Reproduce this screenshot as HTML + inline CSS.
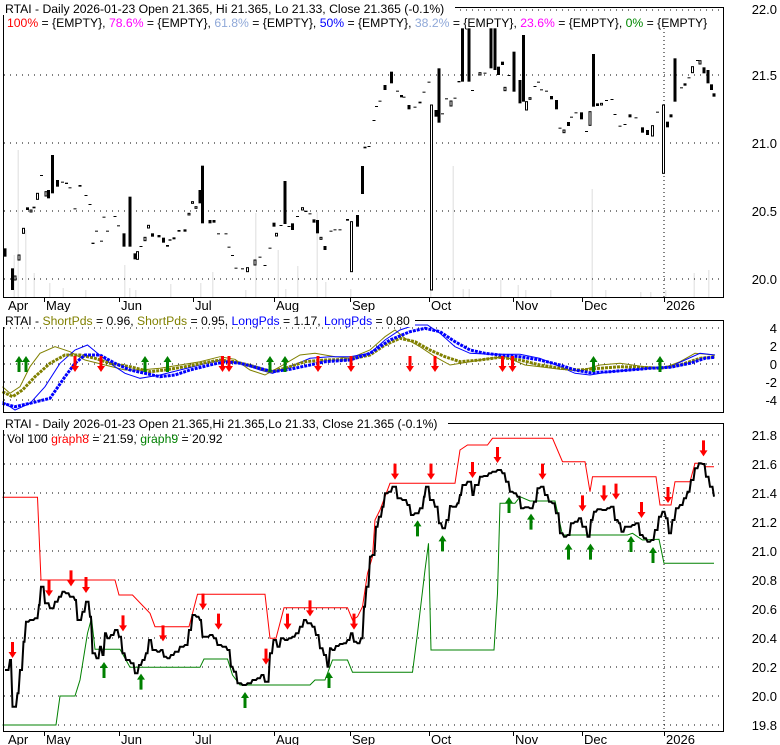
<!DOCTYPE html>
<html><head><meta charset="utf-8"><style>
html,body{margin:0;padding:0;background:#fff;}
svg{display:block;font-family:"Liberation Sans",Arial,sans-serif;}
</style></head><body>
<svg id="s" width="780" height="745" xmlns="http://www.w3.org/2000/svg"></svg>
<script>
var S=document.getElementById('s'),h='';
function L(x1,y1,x2,y2,c,w,d){h+='<line x1="'+x1+'" y1="'+y1+'" x2="'+x2+'" y2="'+y2+'" stroke="'+c+'" stroke-width="'+(w||1)+'"'+(d?' stroke-dasharray="'+d+'"':'')+'/>';}
function T(x,y,t,c,a,fs){h+='<text x="'+x+'" y="'+y+'" font-size="'+(fs||13)+'" fill="'+(c||'#000')+'"'+(a?' text-anchor="'+a+'"':'')+'>'+t+'</text>';}
function P(pts,c,w,fx,fy,d){var s=pts.map(function(p){return (fx(p[0])).toFixed(1)+','+(fy(p[1])).toFixed(1)}).join(' ');h+='<polyline points="'+s+'" fill="none" stroke="'+c+'" stroke-width="'+w+'"'+(d?' stroke-dasharray="'+d+'"':'')+'/>';}
var fx=function(v){return v/2};
var vb=[[27,255],[35,150],[50,230],[67,273],[98,283],[125,288],[170,290],[248,265],[258,288],[270,290],[340,284],[400,283],[424,272],[490,290],[510,213],[555,250],[570,289],[594,266],[633,212],[650,282],[700,289],[860,272],[905,166],[925,289],[937,289],[1000,280],[1035,285],[1050,290],[1100,290],[1183,189],[1210,290],[1280,292],[1300,292],[1330,290],[1387,273],[1416,270]];
vb.forEach(function(v){h+='<rect x="'+(v[0]/2)+'" y="'+v[1]+'" width="1.5" height="'+(297-v[1])+'" fill="#e8e8e8"/>';});
[10,75,143,211,279].forEach(function(y){L(4,y,722,y,'#000',1,'1,5');});
L(664,28,664,297,'#000',1,'1,3');
var C=[[10,745,770,1],[25,805,870,1],[30,828,840,0],[38,765,780,0],[47,685,700,0],[55,622,630,1],[62,630,636,0],[68,620,625,1],[75,580,598,0],[83,525,527,1],[92,575,588,0],[97,570,595,1],[105,465,580,1],[115,540,560,1],[125,545,548,1],[133,548,552,1],[140,562,565,1],[150,625,627,1],[160,555,560,1],[172,585,588,1],[180,612,615,1],[186,728,732,1],[193,692,694,1],[203,722,724,1],[208,650,652,1],[215,692,694,1],[230,648,650,1],[237,676,678,1],[248,700,740,1],[260,590,740,1],[270,760,778,1],[275,755,778,0],[282,738,740,1],[290,712,722,0],[297,676,684,0],[305,700,710,1],[318,705,712,1],[327,713,728,1],[335,735,740,1],[340,718,722,1],[348,712,718,1],[358,690,695,1],[370,688,695,1],[378,640,645,0],[385,605,610,0],[392,620,625,0],[400,570,610,1],[405,497,670,1],[420,660,670,1],[428,660,668,1],[437,700,702,1],[452,700,702,1],[458,740,742,1],[465,765,768,1],[472,803,805,1],[485,805,808,1],[495,803,815,0],[510,780,795,0],[520,770,772,1],[530,795,797,1],[540,743,745,1],[548,668,680,1],[553,700,708,0],[562,675,678,1],[570,543,672,1],[578,678,680,1],[585,670,690,1],[595,648,650,1],[605,623,630,0],[612,632,636,1],[620,640,642,1],[628,658,668,1],[635,660,700,1],[642,712,718,0],[650,738,750,1],[662,692,694,1],[670,688,690,1],[680,688,690,1],[695,657,662,1],[703,665,815,0],[715,645,680,1],[725,498,582,1],[730,440,445,1],[738,438,441,1],[748,360,363,1],[753,318,320,1],[760,302,304,1],[770,255,270,1],[783,215,250,1],[795,272,275,1],[803,285,292,1],[808,290,292,1],[818,315,328,1],[830,320,323,1],[840,305,310,1],[848,275,278,1],[858,245,247,1],[863,315,870,0],[872,330,350,1],[878,205,368,1],[885,340,342,1],[893,295,297,1],[902,303,318,0],[910,293,295,1],[918,243,247,1],[925,85,245,1],[938,85,245,1],[945,270,272,1],[960,218,225,0],[970,218,220,1],[982,85,205,1],[990,85,210,1],[997,200,225,1],[1005,185,195,1],[1010,262,272,0],[1018,225,228,1],[1028,155,275,1],[1040,240,310,1],[1047,105,305,1],[1053,305,330,0],[1060,293,298,0],[1070,258,260,1],[1077,245,248,1],[1083,268,270,1],[1093,272,274,1],[1103,288,298,1],[1113,300,328,1],[1120,383,385,1],[1128,390,398,0],[1137,366,378,1],[1143,350,352,1],[1152,337,340,1],[1163,337,358,1],[1173,393,395,1],[1180,335,376,0],[1187,162,320,1],[1195,310,318,1],[1203,310,315,0],[1213,300,302,1],[1224,297,299,1],[1230,342,345,1],[1240,377,380,1],[1250,372,374,1],[1260,343,352,1],[1272,352,354,1],[1285,382,398,1],[1295,390,405,1],[1305,377,408,0],[1315,335,338,1],[1327,315,520,0],[1335,365,382,1],[1342,343,352,1],[1350,175,305,1],[1363,262,265,1],[1370,250,257,1],[1378,232,235,1],[1385,200,218,0],[1395,180,182,1],[1400,182,192,0],[1408,202,220,1],[1416,210,250,1],[1423,253,270,1],[1428,280,290,1]];
C.forEach(function(c){var x=c[0]/2-1.5,y=c[1]/3,hh=Math.max(1,(c[2]-c[1])/3);
 if(c[3])h+='<rect x="'+x+'" y="'+y+'" width="3" height="'+hh+'" fill="#000"/>';
 else h+='<rect x="'+(x+0.5)+'" y="'+y+'" width="2" height="'+hh+'" fill="#fff" stroke="#000" stroke-width="1"/>';});
h+='<rect x="3.5" y="7.5" width="720" height="290" fill="none" stroke="#000"/>';
h+='<rect x="3" y="0" width="452" height="15" fill="#fff"/>';
T(5,13,'RTAI - Daily 2026-01-23 Open 21.365, Hi 21.365, Lo 21.33, Close 21.365 (-0.1%)','#000',null,12.2);
h+='<text x="7" y="27" font-size="12.2"><tspan fill="#f00">100%</tspan> = {EMPTY}, <tspan fill="#f0f">78.6%</tspan> = {EMPTY}, <tspan fill="#8fa8d8">61.8%</tspan> = {EMPTY}, <tspan fill="#00f">50%</tspan> = {EMPTY}, <tspan fill="#8fa8d8">38.2%</tspan> = {EMPTY}, <tspan fill="#f0f">23.6%</tspan> = {EMPTY}, <tspan fill="#080">0%</tspan> = {EMPTY}</text>';
[['22.0',14],['21.5',80],['21.0',148],['20.5',216],['20.0',284]].forEach(function(a){T(777,a[1],a[0],'#000','end');});
var mt=[[44,'May'],[119,'Jun'],[193,'Jul'],[274,'Aug'],[350,'Sep'],[429,'Oct'],[513,'Nov'],[582,'Dec'],[664,'2026']];
function months(yb,yt){T(8,yt,'Apr');mt.forEach(function(m){L(m[0]+0.5,yb,m[0]+0.5,yb+5,'#000');T(m[0]+2,yt,m[1]);});}
months(297,310);
[328,346,364,382,400].forEach(function(y){L(4,y,722,y,'#000',1,'1,5');});
var f2=function(v){return 310+v/3};
P([[5,230],[20,250],[40,230],[60,170],[80,130],[110,110],[140,125],[170,150],[210,165],[250,180],[280,180],[320,175],[360,165],[400,155],[440,140],[470,148],[500,180],[530,195],[560,170],[600,135],[630,130],[670,140],[700,145],[740,120],[770,80],[790,60],[810,85],[840,110],[870,140],[900,165],[940,155],[980,145],[1010,140],[1050,165],[1080,170],[1120,178],[1160,182],[1200,165],[1240,160],[1290,170],[1330,172],[1360,155],[1390,130],[1430,135]],'#808000',1,fx,f2);
P([[5,275],[30,300],[60,280],[90,230],[120,160],[150,120],[175,105],[195,130],[220,160],[250,190],[280,205],[320,195],[360,180],[400,165],[440,150],[480,160],[520,180],[545,190],[580,170],[620,145],[660,140],[700,140],[740,130],[770,90],[800,60],[830,45],[855,45],[880,70],[910,110],[940,130],[980,133],[1040,133],[1080,145],[1120,170],[1150,190],[1180,195],[1220,185],[1260,180],[1300,175],[1340,170],[1370,150],[1400,130],[1430,135]],'#0000ff',1,fx,f2);
P([[5,245],[25,260],[45,240],[70,200],[100,160],[130,135],[160,135],[190,145],[220,160],[260,170],[300,185],[330,180],[370,170],[410,158],[440,150],[470,155],[510,170],[540,185],[570,175],[610,155],[650,150],[700,148],[740,135],[770,105],[800,85],[830,95],[860,120],[890,140],[920,155],[960,150],[1000,142],[1040,150],[1080,165],[1120,175],[1160,180],[1200,175],[1240,170],[1280,172],[1320,175],[1360,165],[1400,145],[1430,140]],'#808000',3,fx,f2,'3,1');
P([[5,280],[30,290],[60,280],[100,265],[130,200],[150,160],[170,135],[200,135],[230,160],[260,180],[290,190],[320,200],[350,195],[380,180],[420,165],[450,155],[480,160],[520,175],[545,185],[580,178],[620,165],[650,155],[700,150],[740,130],[780,90],[820,65],[850,55],[880,65],[910,95],[940,120],[970,130],[1000,135],[1040,140],[1080,150],[1120,165],[1150,180],[1180,188],[1220,185],[1260,180],[1300,175],[1340,172],[1380,160],[1410,145],[1430,142]],'#0000ff',3,fx,f2,'3,1');
function up(x,y){h+='<polygon points="'+x+','+(y-8)+' '+(x+4)+','+(y-2)+' '+(x+1.5)+','+(y-2)+' '+(x+1.5)+','+(y+8)+' '+(x-1.5)+','+(y+8)+' '+(x-1.5)+','+(y-2)+' '+(x-4)+','+(y-2)+'" fill="#008000"/>';}
function dn(x,y){h+='<polygon points="'+x+','+(y+8)+' '+(x+4)+','+(y+2)+' '+(x+1.5)+','+(y+2)+' '+(x+1.5)+','+(y-8)+' '+(x-1.5)+','+(y-8)+' '+(x-1.5)+','+(y+2)+' '+(x-4)+','+(y+2)+'" fill="#f00"/>';}
[38,52,290,335,540,570,1187,1320].forEach(function(x){up(x/2,364);});
[150,202,445,458,636,702,820,870,1005,1025].forEach(function(x){dn(x/2,364);});
h+='<rect x="3.5" y="320.5" width="720" height="92" fill="none" stroke="#000"/>';
h+='<rect x="3" y="312" width="412" height="15" fill="#fff"/>';
h+='<text x="5" y="325" font-size="12.2">RTAI - <tspan fill="#808000">ShortPds</tspan> = 0.96, <tspan fill="#808000">ShortPds</tspan> = 0.95, <tspan fill="#00f">LongPds</tspan> = 1.17, <tspan fill="#00f">LongPds</tspan> = 0.80</text>';
[['4',333],['2',351],['0',369],['-2',387],['-4',405]].forEach(function(a){T(777,a[1],a[0],'#000','end');});
[435,464,493,522,551,580,609,638,667,696,725].forEach(function(y){L(4,y,722,y,'#000',1,'1,5');});
L(664,440,664,731,'#000',1,'1,3');
var f3=function(v){return 420+v/3};
P([[5,232],[75,232],[82,480],[230,480],[238,525],[265,525],[300,580],[310,620],[378,620],[395,523],[530,523],[540,655],[552,655],[568,563],[695,563],[705,600],[715,590],[725,560],[735,460],[745,410],[750,300],[760,270],[780,190],[910,190],[920,90],[935,75],[975,75],[985,55],[1105,55],[1125,125],[1170,125],[1180,215],[1185,170],[1312,170],[1320,255],[1342,255],[1350,185],[1380,185],[1390,130],[1405,130],[1410,140],[1428,140]],'#f00',1,fx,f3);
P([[5,915],[112,915],[120,828],[150,828],[160,780],[175,640],[183,595],[190,688],[240,688],[260,742],[400,742],[408,717],[455,717],[465,765],[480,795],[620,795],[630,780],[650,780],[665,720],[695,720],[705,757],[825,757],[835,640],[850,450],[857,370],[862,690],[988,690],[995,520],[1000,250],[1030,250],[1040,230],[1060,243],[1110,243],[1125,345],[1255,345],[1265,340],[1285,360],[1318,358],[1328,430],[1428,430]],'#008000',1,fx,f3);
var cl=[[10,750],[20,720],[25,860],[35,820],[40,750],[47,665],[52,605],[60,600],[70,595],[78,555],[82,500],[90,550],[100,565],[110,545],[118,530],[125,515],[132,520],[140,530],[150,540],[155,600],[165,575],[172,545],[180,590],[185,700],[193,715],[200,680],[205,705],[210,640],[215,655],[222,645],[230,630],[238,650],[245,700],[252,720],[262,730],[270,760],[278,735],[285,720],[292,700],[298,660],[305,690],[315,695],[322,690],[328,710],[335,715],[342,705],[350,695],[360,680],[370,675],[378,630],[385,585],[393,590],[400,600],[405,650],[413,650],[420,645],[428,655],[435,675],[445,680],[455,690],[462,740],[468,755],[475,790],[485,795],[495,790],[505,780],[515,775],[523,765],[530,785],[540,700],[547,660],[555,680],[562,655],[570,660],[578,655],[585,650],[592,640],[600,620],[608,600],[615,610],[625,620],[632,645],[640,685],[648,705],[655,740],[660,685],[665,690],[672,678],[680,672],[688,670],[695,660],[702,640],[708,665],[715,670],[722,655],[728,560],[733,500],[740,410],[745,405],[752,320],[758,290],[765,260],[770,220],[778,215],[785,200],[795,235],[805,240],[815,255],[822,285],[830,280],[840,265],[848,230],[852,200],[860,240],[870,260],[878,310],[885,325],[893,300],[900,258],[905,260],[915,250],[920,225],[925,195],[935,185],[945,225],[950,195],[960,170],[968,168],[978,160],[985,155],[995,150],[1005,160],[1012,185],[1020,215],[1028,220],[1035,230],[1042,265],[1050,262],[1060,265],[1068,245],[1075,205],[1082,200],[1090,225],[1098,245],[1105,250],[1112,280],[1120,340],[1128,350],[1135,345],[1142,310],[1150,305],[1158,295],[1165,320],[1175,350],[1182,300],[1188,275],[1195,268],[1205,270],[1215,265],[1222,260],[1230,300],[1238,310],[1243,335],[1250,320],[1258,320],[1265,315],[1272,310],[1280,345],[1288,355],[1295,365],[1303,360],[1310,330],[1318,290],[1325,275],[1332,295],[1338,340],[1345,300],[1352,265],[1360,255],[1368,235],[1375,215],[1382,180],[1390,145],[1398,130],[1405,132],[1412,170],[1420,200],[1428,230]];
var st=[];cl.forEach(function(p,i){if(i>0)st.push([p[0]-3,cl[i-1][1]]);st.push(p);});
P(st,'#000',2,fx,f3);
[[208,750],[282,785],[490,840],[658,780],[835,325],[885,370],[1018,255],[1062,305],[1137,395],[1181,395],[1262,372],[1306,405]].forEach(function(a){up(a[0]/2,f3(a[1]));});
[[25,690],[98,505],[142,475],[172,495],[246,610],[326,640],[406,545],[437,605],[532,710],[575,605],[620,565],[708,605],[790,155],[862,155],[945,150],[995,105],[1085,155],[1165,250],[1208,220],[1232,215],[1283,270],[1336,225],[1407,85]].forEach(function(a){dn(a[0]/2,f3(a[1]));});
h+='<rect x="3.5" y="423.5" width="720" height="308" fill="none" stroke="#000"/>';
h+='<rect x="3" y="415" width="445" height="15" fill="#fff"/>';
T(5,428,'RTAI - Daily 2026-01-23 Open 21.365,Hi 21.365,Lo 21.33, Close 21.365 (-0.1%)','#000',null,12.2);
h+='<text x="7" y="443" font-size="12.2">Vol 100 <tspan fill="#f00">graph8</tspan> = 21.59, <tspan fill="#008000">graph9</tspan> = 20.92</text>';
[['21.8',440],['21.6',469],['21.4',498],['21.2',527],['21.0',556],['20.8',585],['20.6',614],['20.4',643],['20.2',672],['20.0',701],['19.8',730]].forEach(function(a){T(777,a[1],a[0],'#000','end');});
months(731,744);
S.innerHTML=h;
</script>
</body></html>
